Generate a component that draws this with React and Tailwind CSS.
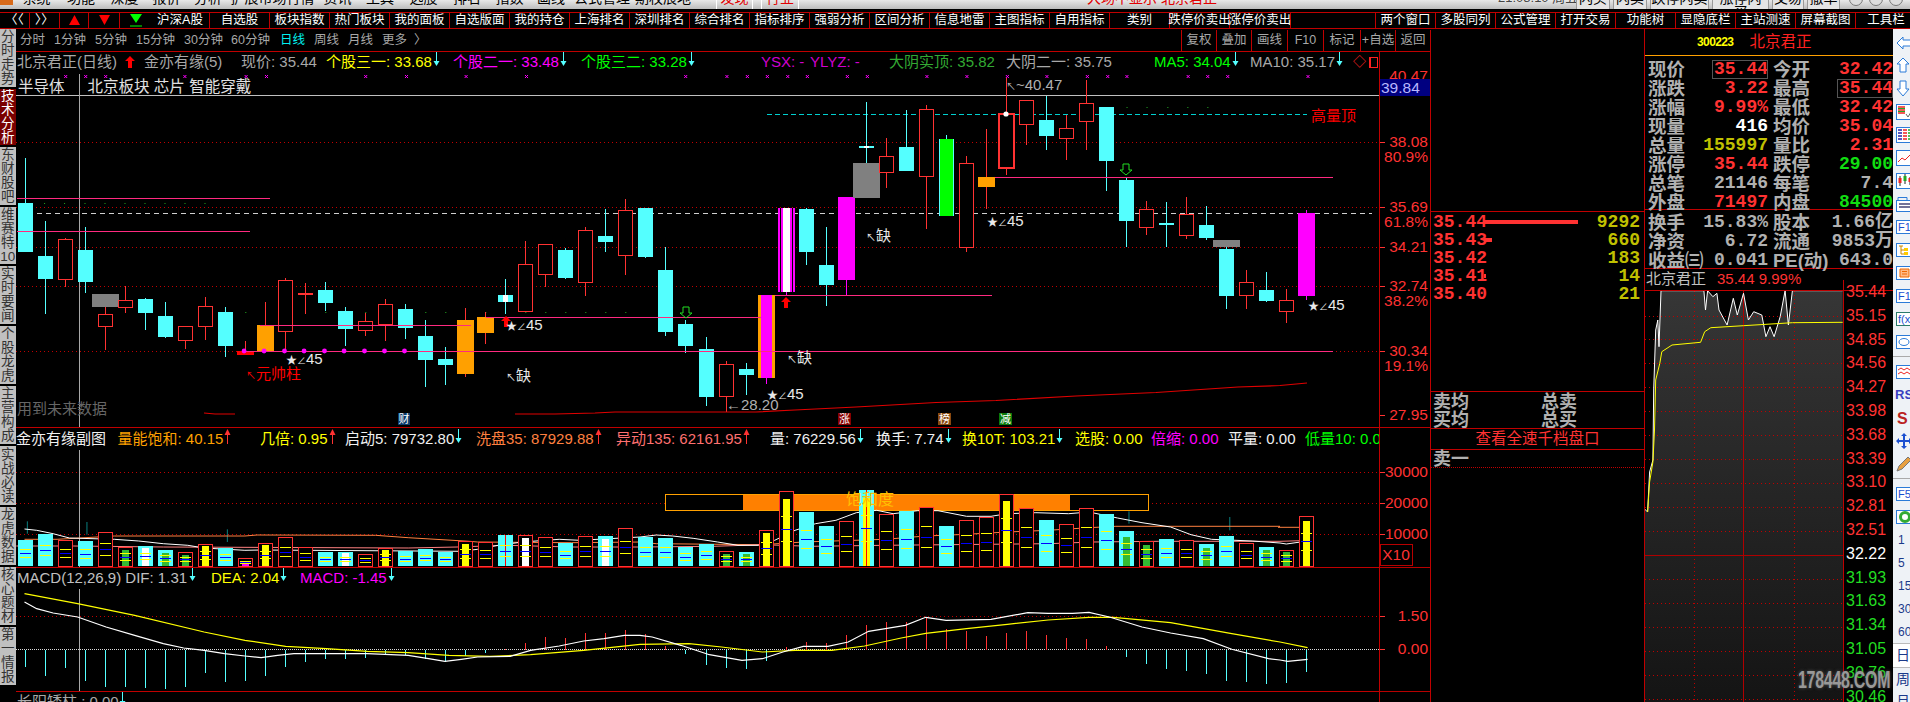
import React from "react";

const CY = "#54ffff", RD = "#ff3232", MG = "#ff00ff", OR = "#ffa000", PK = "#ff2a80", LR = "#b80000";
const cx = (i) => 24.5 + 20.03 * i;

// [type, high, bodyTop, bodyBottom, low]
const candles = [
  ["c",158,203,252,252],["c",221,256,279,314],["r",238,239,279,287],["c",227,250,282,293],["r",294,314,326,350],
  ["r",286,300,307,313],["c",298,299,313,330],["c",302,316,337,338],["r",326,326,340,349],["r",297,306,326,340],
  ["c",307,312,346,357],["R",341,351,355,355],["o",302,325,351,351],["r",278,280,331,350],["x",283,293,295,314],
  ["c",282,290,303,311],["c",307,311,329,346],["r",313,321,330,336],["r",299,304,324,341],["c",304,309,328,339],
  ["c",320,336,360,387],["c",347,359,365,385],["o",308,320,374,377],["o",312,317,333,344],["c",279,295,302,314],
  ["r",241,264,311,312],["r",244,244,274,287],["c",248,250,278,279],["r",227,230,282,296],["c",209,236,242,252],
  ["r",199,210,255,275],["c",208,208,257,258],["c",247,270,332,336],["c",320,324,346,353],["c",337,349,397,406],
  ["r",361,364,396,412],["c",363,369,375,395],["M",295,295,378,384],["S",208,208,292,295],["c",208,209,252,265],
  ["c",227,265,285,306],["m",197,197,280,295],["y",102,146,148,198],["r",138,156,172,188],["c",110,147,171,171],
  ["r",105,109,176,229],["g",135,139,216,216],["r",156,163,247,252],["o",129,177,187,209],["T",78,114,168,175],
  ["r",100,100,124,145],["c",96,120,136,150],["r",115,128,138,160],["r",80,103,121,150],["c",107,107,161,191],
  ["c",178,180,221,247],["r",201,209,227,235],["z",202,223,225,247],["r",197,214,235,239],["c",206,225,238,240],
  ["c",240,249,296,309],["r",270,282,295,309],["c",272,290,301,302],["r",289,300,311,323],["m",210,213,296,300],
];
const wide = { 4:[294,307], 42:[163,198], 60:[240,247] };

const pinkLines = [[17,270,198],[17,250,231],[260,471,325],[244,1333,351],[486,761,317],[775,992,295],[995,1333,177]];
const dots = [598,647,697,745,795,843,893,942,991].map((x) => x / 2.45);
const xMarks = [161,210,259,453,603,653,896,996,1142,1290].map((x) => x / 2.45)
  .concat([112,213,263,312,362,410,508,557,703,801,900,997,1096,1146,1193,1343,1391,1440].map((x) => 640 + x / 2.45))
  .concat([1308]);
const greens = [
  ...[108,157,207,256,305,354,403,452,501].map((x) => [x / 2.45, 203]),
  ...[601,797,895,1042,1091,1189,1287,1336,1385,1434,1483,1532].map((x) => [x / 2.45, 312]),
  ...[1192,1241,1292,1341,1390].map((x) => [640 + x / 2.45, 107]),
];

// [kind, top, innerColor, innerTop]
const vol = [
  ["c",540],["c",534],["r",540],["c",541],["r",532],["r",547,"#33bb33",550],["c",546,"#fff",548],["c",550,"#33bb33",553],["r",552,"#33bb33",555],["r",544,"#ff0",546],
  ["c",548],["r",558,MG,561],["r",543,"#ff0",545],["r",537],["r",547],["c",552],["c",552,"#fff",553],["r",554],["r",548,"#ff0",550],["c",551],
  ["c",549],["c",552],["r",541,"#ff0",544],["r",542],["c",535],["r",535,"#fff",538],["r",537],["c",543],["r",536],["c",536,"#fff",539],
  ["r",528],["c",537],["c",538],["c",547],["c",544],["r",551,"#33bb33",554],["c",552,"#33bb33",554],["r",530,"#ff0",533],["r",491,"#ff0",499],["c",512],
  ["c",526],["r",521],["c",490,"#ff0",498],["r",514],["c",511],["r",507],["c",526],["r",520],["r",517],["r",494,"#ff0",501],
  ["r",508],["c",520],["r",524],["r",508],["c",514],["c",531,"#33bb33",537],["r",541,"#33bb33",545],["c",539],["r",540],["c",544,"#33bb33",548],
  ["c",536],["r",543],["c",547,"#33bb33",550],["r",550,"#33bb33",552],["r",516,"#ff0",521],
];
const cv = (pts, off, yo) => pts.map(([x, y]) => `${(off + x / 2.45).toFixed(1)},${(yo + y / 3).toFixed(1)}`).join(" ");
const volWhite = cv([[60,201],[90,205],[130,215],[170,228],[280,232],[340,237],[400,245],[460,250],[500,258],[600,265],[640,264],[1130,268],[1170,262],[1220,250],[1280,240],[1370,232],[1420,235],[1568,225]],0,462) + " " +
  cv([[40,219],[80,222],[130,229],[190,240],[240,250],[290,250],[330,235],[380,205],[430,185],[480,175],[530,152],[580,145],[620,155],[680,146],[730,146],[800,163],[860,163],[900,155],[970,152],[1050,155],[1100,150],[1170,168],[1230,182],[1300,195],[1350,218],[1400,232],[1500,237],[1568,243]],640,462) + " " +
  cv([[40,246],[75,240]],1270,462);
const volOrange = cv([[60,232],[140,232],[280,222],[600,222],[630,219],[920,220],[1000,227],[1150,238],[1170,240],[1400,242],[1568,240]],0,462) + " " +
  cv([[40,245],[300,248],[400,240],[600,232],[700,222],[800,217],[900,210],[1000,205],[1100,197],[1166,193],[1568,193]],640,462) + " " +
  cv([[20,196],[75,196]],1270,462);
const volPink = cv([[40,252],[180,252],[400,255],[1000,258],[1120,255],[1240,250],[1400,255],[1568,255]],0,462) + " " +
  cv([[180,253],[300,248],[420,253],[600,250],[1000,245],[1110,240],[1270,238],[1568,238]],640,462) + " " +
  cv([[75,236]],1270,462);
const teal = [[67,178,215,0],[213,180,218,0],[557,202,240,0],[1198,148,185,640],[1445,165,205,640]];

const macdEnds = [615,642,617,657,675,675,678,682,675,632,660,657,642,614,600,590,590,587,578,580,590,600,582,572,562,544,525,528,514,514,504,
  516,553,575,609,617,621,597,556,540,544,520,490,481,480,464,502,507,522,513,507,519,528,531,552,585,606,621,627,636,657,660,666,663,630];
const macdWhite = cv([[60,420],[90,440],[130,453],[190,465],[260,495],[330,520],[400,545],[450,558],[500,565],[550,575],[600,582],[640,587],[680,580],[720,575],[900,575],[1000,580],[1050,590],[1090,598],[1130,592],[1170,585],[1250,583],[1300,565],[1370,552],[1430,537],[1480,530],[1530,520],[1568,520]],0,462) + " " +
  cv([[30,525],[100,550],[170,578],[250,595],[300,590],[350,570],[400,553],[460,553],[510,540],[560,508],[650,490],[700,466],[750,475],[860,472],[950,452],[1000,454],[1060,454],[1100,451],[1150,465],[1230,495],[1300,513],[1380,530],[1450,562],[1540,590],[1568,594]],640,462) + " " +
  cv([[43,598],[92,592]],1270,462);
const macdYellow = cv([[60,395],[190,425],[330,460],[500,510],[600,535],[700,553],[800,560],[900,568],[1000,572],[1100,580],[1200,583],[1300,578],[1430,565],[1568,547]],0,462) + " " +
  cv([[120,545],[200,555],[300,570],[380,565],[470,565],[550,552],[640,528],[700,514],[800,500],[900,487],[1000,474],[1100,466],[1160,466],[1300,482],[1450,515],[1568,540]],640,462) + " " +
  cv([[92,557]],1270,462);

const priceLine = cv([[917,225],[917,140],[925,150],[930,30]],1270,462) + " " +
  cv([[938,690],[940,480],[945,300],[950,270],[953,350],[958,182],[1063,182],[1067,240],[1072,182],[1085,200],[1095,190],[1100,240],[1120,285],[1135,205],[1145,255],[1160,190],[1172,270],[1185,245],[1205,255],[1215,320],[1225,290],[1235,320],[1250,260],[1262,182],[1270,285],[1280,182],[1403,182]],1270,230);
const avgLine = cv([[925,150],[930,60],[938,0]],1270,462) + " " +
  cv([[942,600],[945,450],[955,400],[960,365],[985,345],[1055,337],[1065,305],[1080,293],[1160,287],[1280,278],[1403,277]],1270,230);
const fillLine = `1645,702 1645,537 ${priceLine} 1843,702`;
const tLabels = [["35.44",RD],["35.15",RD],["34.85",RD],["34.56",RD],["34.27",RD],["33.98",RD],["33.68",RD],["33.39",RD],["33.10",RD],["32.81",RD],["32.51",RD],["32.22","#fff"],["31.93","#22dd22"],["31.63","#22dd22"],["31.34","#22dd22"],["31.05","#22dd22"],["30.76","#22dd22"],["30.46","#22dd22"]];
const tY = [292,316,339,363,387,411,435,459,483,507,531,555,579,603,627,651,675,699];

const menu = [
  ["系统","w-[45px]"],["功能","w-[44px]"],["深度","w-[43px]"],["报价","w-[41px]"],["分析","w-[42px]"],["扩展市场行情","w-[87px]"],["资讯","w-[43px]"],["工具","w-[42px]"],["选股","w-[45px]"],["排名","w-[42px]"],["指数","w-[43px]"],["画线","w-[40px]"],["公式管理","w-[62px]"],["期权展地","w-[60px]"],
];
const tools = [
  ["沪深A股","w-[59px]"],["自选股","w-[60px]"],["板块指数","w-[60px]"],["热门板块","w-[60px]"],["我的面板","w-[60px]"],["自选版面","w-[60px]"],["我的持仓","w-[60px]"],["上海排名","w-[60px]"],["深圳排名","w-[60px]"],["综合排名","w-[60px]"],["指标排序","w-[60px]"],["强弱分析","w-[60px]"],["区间分析","w-[60px]"],["信息地雷","w-[60px]"],["主图指标","w-[60px]"],["自用指标","w-[60px]"],["类别","w-[60px]"],["跌停价卖出","w-[60px]"],["涨停价卖出","w-[61px]"],
];
const tools2 = ["两个窗口","多股同列","公式管理","打开交易","功能树","显隐底栏","主站测速","屏幕截图","工具栏"];
const sideTabs = [
  ["分时走势","h-[60px]"],["技术分析","h-[58px]",1],["东财股吧","h-[60px]"],["维赛特10","h-[59px]"],["实时要闻","h-[60px]"],["个股龙虎","h-[60px]"],["主营构成","h-[60px]"],["实战必读","h-[61px]"],["龙虎数据","h-[60px]"],["核心题材","h-[60px]"],["第一情报","h-[60px]"],
];
const periods = [["分时","w-[34px]"],["1分钟","w-[41px]"],["5分钟","w-[41px]"],["15分钟","w-[48px]"],["30分钟","w-[47px]"],["60分钟","w-[49px]"],["日线","w-[34px]",1],["周线","w-[34px]"],["月线","w-[34px]"],["更多","w-[32px]"],["〉","w-[24px]"]];
const periodBtns = [["复权","w-[35px]"],["叠加","w-[35px]"],["画线","w-[36px]"],["F10","w-[36px]"],["标记","w-[37px]"],["+自选","w-[35px]"],["返回","w-[36px]"]];

const quote = [
  ["现价","35.44",RD,"今开","32.42",RD,1],["涨跌","3.22",RD,"最高","35.44",RD,2],["涨幅","9.99%",RD,"最低","32.42",RD],["现量","416","#fff","均价","35.04",RD],
  ["总量","155997","#c0c000","量比","2.31",RD],["涨停","35.44",RD,"跌停","29.00","#11dd11"],["总笔","21146","#b0b0b0","每笔","7.4","#b0b0b0"],["外盘","71497",RD,"内盘","84500","#11dd11"],
];
const quote2 = [["换手","15.83%","股本","1.66亿"],["净资","6.72","流通","9853万"],["收益㈢","0.041","PE(动)","643.0"]];
const book = [["35.44","9292","w-[94px]"],["35.43","660","w-[8px]"],["35.42","183","w-0"],["35.41","14","w-[2px]"],["35.40","21","w-0"]];

const mono = "[font-family:'Liberation_Mono','Noto_Sans_CJK_SC',monospace]";

function Down({ c = CY }) {
  return (
    <svg width="7" height="15" viewBox="0 0 7 15" className="inline-block shrink-0 align-top">
      <path d="M3.5 0V11" stroke={c} strokeWidth="1" />
      <path d="M0.5 9H6.5L3.5 14Z" fill={c} />
    </svg>
  );
}
function Up({ c = RD }) {
  return (
    <svg width="7" height="15" viewBox="0 0 7 15" className="inline-block shrink-0 align-top">
      <path d="M3.5 4V15" stroke={c} strokeWidth="1" />
      <path d="M0.5 6H6.5L3.5 0Z" fill={c} />
    </svg>
  );
}

function Candle({ d, i }) {
  const [t, hi, top, bot, lo] = d;
  const x = Math.round(cx(i));
  const W = wide[i];
  const colors = { c: CY, r: RD, R: RD, o: RD, x: RD, z: CY, M: MG, S: MG, m: MG, y: CY, g: CY, T: RD };
  const col = colors[t];
  const h = Math.max(bot - top, 1);
  return (
    <g shapeRendering="crispEdges">
      <line x1={x + 0.5} x2={x + 0.5} y1={hi} y2={lo} stroke={col} />
      {t === "c" && <rect x={x - 7} y={top} width="15" height={h} fill={CY} />}
      {t === "r" && <rect x={x - 6.5} y={top + 0.5} width="14" height={h} fill="#000" stroke={RD} />}
      {t === "T" && <rect x={x - 7} y={top} width="15" height={h} fill="#000" stroke={RD} strokeWidth="1.5" />}
      {t === "R" && <rect x={x - 8} y={top} width="17" height={h} fill="#ff0000" />}
      {t === "o" && <rect x={x - 8} y={top} width="17" height={h} fill={OR} />}
      {t === "x" && <rect x={x - 7} y={top} width="15" height={h} fill={RD} />}
      {t === "z" && <rect x={x - 7} y={top} width="15" height={h} fill={CY} />}
      {t === "M" && <><rect x={x - 8} y={top} width="17" height={h} fill={OR} /><rect x={x - 5} y={top} width="11" height={h} fill={MG} /></>}
      {t === "S" && <><rect x={x - 8} y={top} width="17" height={h} fill={MG} /><rect x={x - 6} y={top} width="1" height={h} fill="#000" /><rect x={x + 6} y={top} width="1" height={h} fill="#000" /><rect x={x - 3} y={top} width="7" height={h} fill="#fff" /></>}
      {t === "m" && <rect x={x - 8} y={top} width="17" height={h} fill={MG} />}
      {t === "y" && <rect x={x - 7} y={top} width="15" height={h} fill={CY} />}
      {t === "g" && <><rect x={x - 7} y={top} width="15" height={h} fill={CY} /><rect x={x - 6} y={top} width="13" height={h} fill="#00ff00" /></>}
      {W && <rect x={x - 13} y={W[0]} width="27" height={W[1] - W[0]} fill="#808080" />}
      {i === 24 && <rect x={x - 2} y={top} width="5" height={h} fill="#fff" />}
      {i === 42 && <rect x={x - 2} y={top} width="5" height={h} fill="#fff" />}
    </g>
  );
}

function MainChart() {
  return (
    <svg viewBox="16 72 1363 355" width="1363" height="355" className="block absolute inset-0">
      {[142, 207, 247, 286, 351].map((y) => (
        <line key={y} x1="16" x2="1379" y1={y + 0.5} y2={y + 0.5} stroke="#c00000" strokeDasharray="1 3" />
      ))}
      <line x1="28" x2="1372" y1="213.5" y2="213.5" stroke="#d0d0d0" strokeDasharray="5 4" />
      <line x1="16" x2="1379" y1="95.5" y2="95.5" stroke="#c0c0c0" />
      <line x1="79.5" x2="79.5" y1="74" y2="427" stroke="#a8a8a8" />
      <line x1="767" x2="1307" y1="114.5" y2="114.5" stroke="#00d0d0" strokeDasharray="5 3" />
      {greens.map(([x, y], i) => <rect key={i} x={x} y={y} width="1" height="1" fill="#22aa22" />)}
      {xMarks.map((x, i) => (
        <g key={i} stroke={MG}><line x1={x - 1.5} x2={x + 1.5} y1="75" y2="78" /><line x1={x + 1.5} x2={x - 1.5} y1="75" y2="78" /></g>
      ))}
      {candles.map((d, i) => <Candle key={i} d={d} i={i} />)}
      {pinkLines.map(([a, b, y], i) => <line key={i} x1={a} x2={b} y1={y + 0.5} y2={y + 0.5} stroke={PK} />)}
      {dots.map((x, i) => <circle key={i} cx={x} cy="351" r="2.4" fill={MG} />)}
      <polyline points="204,413 215,414 235,414" fill="none" stroke="#e00000" />
      <polyline points="515,414 555,414 595,413 615,412 756,412 795,410 856,407 936,402.5 996,400.5 1076,396 1156,392.5 1238,387 1280,385.5 1307,383" fill="none" stroke="#e00000" strokeWidth="1.2" />
      <circle cx="1006" cy="114" r="2.6" fill="#fff" />
      <path d="M786 297l5 5h-3v6h-4v-6h-3z" fill="#ff0000" />
      <path d="M506 316l5 5h-3v6h-4v-6h-3z" fill="#ff0000" />
      <path d="M683 307h6v6h3l-6 5-6-5h3z" fill="none" stroke="#22dd22" />
      <path d="M1123 164h6v6h3l-6 5-6-5h3z" fill="none" stroke="#22dd22" />
      <g fontSize="15" fill="#e8e8e8">
        {[[286,364],[506,330],[767,399],[987,226],[1308,310]].map(([x, y], i) => (
          <text key={i} x={x} y={y}><tspan fontSize="11">★</tspan><tspan fontSize="9">∠</tspan>45</text>
        ))}
        {[[506,381],[787,363],[866,241]].map(([x, y], i) => (
          <text key={i} x={x} y={y}><tspan fontSize="10">↖</tspan>缺</text>
        ))}
      </g>
      <text x="246" y="379" fontSize="15" fill="#ff0000"><tspan fontSize="10">↖</tspan>元帅柱</text>
      <text x="1311" y="121" fontSize="15" fill="#ff0000">高量顶</text>
      <text x="17" y="414" fontSize="15" fill="#666">用到未来数据</text>
      <text x="726" y="410" fontSize="15" fill="#b0b0b0">←28.20</text>
      <text x="1006" y="90" fontSize="15" fill="#b0b0b0"><tspan fontSize="10">↖</tspan>~40.47</text>
      <g fontSize="11" textAnchor="middle" fill="#fff">
        <rect x="398" y="413" width="12" height="12" fill="#0a3a6a" /><text x="404" y="423">财</text>
        <rect x="838" y="413" width="13" height="12" fill="#880000" /><text x="844.5" y="423">涨</text>
        <rect x="938" y="413" width="13" height="12" fill="#8a4a10" /><text x="944.5" y="423">榜</text>
        <rect x="999" y="413" width="13" height="12" fill="#0a7a0a" /><text x="1005.5" y="423">减</text>
      </g>
    </svg>
  );
}

function SubChart() {
  return (
    <svg viewBox="16 450 1363 117" width="1363" height="117" className="block">
      {[472, 503, 534].map((y) => <line key={y} x1="16" x2="1379" y1={y + 0.5} y2={y + 0.5} stroke="#c00000" strokeDasharray="1 3" />)}
      <line x1="79.5" x2="79.5" y1="450" y2="567" stroke="#a8a8a8" />
      <rect x="665.5" y="494.5" width="483" height="16" fill="#000" stroke={OR} />
      <rect x="743" y="495" width="327" height="15" fill="#ff8000" />
      {teal.map(([x, a, b, o], i) => <line key={i} x1={o + x / 2.45} x2={o + x / 2.45} y1={462 + a / 3} y2={462 + b / 3} stroke="#0a8080" />)}
      <polyline points={volOrange} fill="none" stroke="#ff8040" />
      <polyline points={volPink} fill="none" stroke="#ff8080" />
      <polyline points={volWhite} fill="none" stroke="#fff" />
      {vol.map(([k, top, ic, it], i) => {
        const x = Math.round(cx(i));
        const h = 566 - top;
        return (
          <g key={i} shapeRendering="crispEdges">
            {k === "c" ? <rect x={x - 7} y={top} width="15" height={h} fill={CY} /> : <rect x={x - 6.5} y={top + 0.5} width="14" height={h} fill="#000" stroke={RD} />}
            {ic && <rect x={x - 3} y={it} width="7" height={566 - it} fill={ic} />}
            {i === 24 || i === 42 ? <line x1={x + 0.5} x2={x + 0.5} y1={top} y2="566" stroke="#ff0000" /> : null}
            <rect x={x - 5} y={top + h * 0.33} width="11" height="1" fill="#ffff00" />
            <rect x={x - 5} y={top + h * 0.5} width="11" height="1" fill="#0000ff" />
            <rect x={x - 5} y={top + h * 0.67} width="11" height="1" fill="#ffff00" />
          </g>
        );
      })}
      <text x="846" y="505" fontSize="16" fill="#ffc000">饱和度</text>
    </svg>
  );
}

function MacdChart() {
  return (
    <svg viewBox="16 589 1363 102" width="1363" height="102" className="block">
      <line x1="16" x2="1379" y1="616.5" y2="616.5" stroke="#c00000" strokeDasharray="1 3" />
      <line x1="16" x2="1379" y1="649.5" y2="649.5" stroke="#d8d8d8" strokeDasharray="1 1" />
      <line x1="79.5" x2="79.5" y1="589" y2="691" stroke="#a8a8a8" />
      {macdEnds.map((e, i) => {
        const x = Math.round(cx(i)) + 0.5;
        const y = 462 + e / 3;
        return <line key={i} x1={x} x2={x} y1="649.5" y2={y} stroke={e > 562 ? CY : RD} shapeRendering="crispEdges" />;
      })}
      <polyline points={macdYellow} fill="none" stroke="#ffff00" strokeWidth="1.2" />
      <polyline points={macdWhite} fill="none" stroke="#fff" strokeWidth="1.2" />
    </svg>
  );
}

function AxisCol() {
  return (
    <svg viewBox="1380 52 50 650" width="50" height="650" className="block">
      <g fontSize="15.5" fill={RD} textAnchor="end">
        <text x="1428" y="81">40.47</text>
        <rect x="1380" y="79" width="50" height="17" fill="#000080" />
        <text x="1381" y="93" textAnchor="start" fill="#b8b8ff">39.84</text>
        {[["38.08",147],["80.9%",162],["35.69",212],["61.8%",227],["34.21",252],["32.74",291],["38.2%",306],["30.34",356],["19.1%",371],["27.95",420]].map(([s, y]) => (
          <text key={s} x="1428" y={y}>{s}</text>
        ))}
        {[["30000",477],["20000",508],["10000",539],["1.50",621],["0.00",654]].map(([s, y]) => (
          <text key={s} x="1428" y={y}>{s}</text>
        ))}
        <rect x="1380.5" y="544.5" width="32" height="21" fill="none" stroke={LR} />
        <text x="1396" y="560" textAnchor="middle">X10</text>
      </g>
      {[142,207,247,286,351,415,472,503,534,616,649].map((y) => <line key={y} x1="1380" x2="1385" y1={y + 0.5} y2={y + 0.5} stroke={RD} />)}
      {[427.5,567.5,691.5].map((y) => <line key={y} x1="1380" x2="1430" y1={y} y2={y} stroke={LR} />)}
    </svg>
  );
}

function Icon({ n }) {
  const b = "#2b7bd8";
  const s = { 0: <path d="M2 10l6-6v3h8v6H8v3z" fill="#fff" stroke={b} />,
    1: <path d="M8 2l6 6h-3v8H5V8H2z" fill="#fff" stroke={b} />,
    2: <path d="M5 2h6v8h3l-6 7-6-7h3z" fill="#fff" stroke={b} />,
    3: <g><rect x="1.5" y="2.5" width="17" height="15" fill="#fff" stroke={b} /><path d="M3 5h7M3 8h7M3 11h7" stroke="#e22" strokeWidth="1.5" /><path d="M3 6.5h7M3 9.5h7" stroke="#2a2" /><path d="M11 12l2 3 3-5" stroke="#666" fill="none" /></g>,
    4: <g><rect x="1.5" y="2.5" width="17" height="15" fill="#fff" stroke={b} /><path d="M3 5h4M3 8h4M3 11h4M3 14h4" stroke="#22a" strokeWidth="1.5" /><path d="M8 5h4M8 8h4M8 11h4M8 14h4" stroke="#e22" strokeWidth="1.5" /><path d="M13 5h3M13 8h3M13 11h3M13 14h3" stroke="#2a2" strokeWidth="1.5" /></g>,
    5: <g><rect x="1.5" y="2.5" width="17" height="15" fill="#fff" stroke={b} /><path d="M3 14l4-4 3 2 6-6" stroke="#e22" fill="none" /></g>,
    6: <g><rect x="1.5" y="2.5" width="17" height="15" fill="#fff" stroke={b} /><path d="M5 5v10M10 3v10M15 6v8" stroke="#222" /><rect x="3.5" y="7" width="3" height="5" fill="#e22" /><rect x="8.5" y="5" width="3" height="5" fill="#2a2" /><rect x="13.5" y="7" width="3" height="4" fill="#e22" /></g>,
    7: <g><rect x="1.5" y="6.5" width="17" height="11" fill="#fff" stroke={b} /><path d="M4 10h11M4 13h11" stroke="#447" strokeWidth="1.5" /><path d="M3 6V3.5h9V6" stroke={b} fill="none" /></g>,
    9: <g><rect x="1.5" y="3.5" width="17" height="13" fill="#fff" stroke={b} /><path d="M4 6h4M6 6v8h4M6 10h4" stroke="#c80" fill="none" /><rect x="9" y="8" width="4" height="3" fill="#fc0" /><rect x="9" y="12" width="4" height="3" fill="#fc0" /></g>,
    10: <g><rect x="1.5" y="3.5" width="17" height="13" fill="#fff" stroke={b} /><path d="M5 6h9v8H5z" fill="#fb8" stroke="#e60" /><path d="M7 8.5h5M7 11h5" stroke="#e60" /></g>,
    13: <g><rect x="1.5" y="3.5" width="17" height="13" fill="#fff" stroke={b} /><ellipse cx="9" cy="10" rx="5" ry="3.5" fill="none" stroke={b} /></g>,
    14: <g><rect x="1.5" y="3.5" width="17" height="13" fill="#fff" stroke={b} /><path d="M3 8l3-2 3 2 3-2 3 2M3 12l3-2 3 2 3-2 3 2" stroke="#e22" fill="none" /></g>,
    16: <text x="2" y="16" fontSize="16" fontWeight="700" fill="#b22">S</text>,
    17: <path d="M9 2l3 3h-2v4h4V7l3 3-3 3v-2h-4v4h2l-3 3-3-3h2v-4H4v2l-3-3 3-3v2h4V5H6z" fill="#1a4fd0" />,
    18: <path d="M2 17l2-5 9-9 3 3-9 9z" fill="#e8a040" stroke="#777" />,
    20: <g><rect x="1.5" y="3.5" width="17" height="13" fill="#fff" stroke={b} /><circle cx="10" cy="10" r="4.5" fill="none" stroke="#3a3" strokeWidth="3" /></g>,
  };
  const texts = { 8: "F10", 11: "F12", 12: "f(x)", 19: "F5" };
  if (texts[n]) return (
    <svg width="20" height="20" viewBox="0 0 20 20" className="block shrink-0"><rect x="1.5" y="3.5" width="17" height="13" fill="#fff" stroke={n === 12 ? "#2a7a6a" : b} /><text x="3" y="14" fontSize="11" fill="#1a4fd0">{texts[n]}</text></svg>
  );
  if (n === 15) return <div className="text-[13px] font-bold text-[#3a3fc0] leading-none">RSI</div>;
  return <svg width="20" height="20" viewBox="0 0 20 20" className="block shrink-0">{s[n]}</svg>;
}

function RightBar() {
  const nums = ["1", "5", "15", "30", "60"];
  return (
    <div className="w-[17px] shrink-0 overflow-hidden bg-[#eef2f6] flex flex-col pt-[2px]">
      {[0,1,2,3,4,5,6,7,8,9,10,11,12,13].map((n) => (
        <div key={n} className="h-[23px] shrink-0 flex items-center pl-[2px]"><Icon n={n} /></div>
      ))}
      <div className="h-px bg-[#aaa] my-[3px] shrink-0" />
      {[14,15,16,17,18].map((n) => (
        <div key={n} className="h-[23px] shrink-0 flex items-center pl-[2px]"><Icon n={n} /></div>
      ))}
      <div className="h-px bg-[#aaa] my-[3px] shrink-0" />
      {[19,20].map((n) => (
        <div key={n} className="h-[23px] shrink-0 flex items-center pl-[2px]"><Icon n={n} /></div>
      ))}
      {nums.map((n) => (
        <div key={n} className="h-[23px] shrink-0 flex items-center pl-[5px] text-[12px] text-[#1a3a8a]">{n}</div>
      ))}
      <div className="h-[25px] shrink-0 flex items-center pl-[3px] text-[14px] text-[#1a3a8a] bg-white border-y border-[#bbb]">日</div>
      <div className="h-[23px] shrink-0 flex items-center pl-[3px] text-[14px] text-[#1a3a8a]">周</div>
      <div className="h-[20px] shrink-0 flex items-center pl-[3px] text-[14px] text-[#1a3a8a]">月</div>
    </div>
  );
}

function Sidebar() {
  return (
    <div className="w-[16px] shrink-0 bg-black flex flex-col">
      {sideTabs.map(([s, h, on]) => (
        <div key={s} className={`${h} shrink-0 w-[15.5px] border-b-2 border-black flex flex-col items-center justify-center overflow-hidden text-[13.5px] leading-[14px] ${on ? "bg-[#7a0000] text-white" : "bg-[#c0c0c0] text-[#333]"}`}>
          {(s === "维赛特10" ? ["维", "赛", "特", "10"] : s.split("")).map((c, i) => <span key={i} className="block">{c}</span>)}
        </div>
      ))}
    </div>
  );
}

function TopMenu() {
  return (
    <div className="h-[9px] shrink-0 bg-gradient-to-b from-[#e8e8e8] to-[#bdbdbd] flex overflow-hidden relative text-[14px] leading-[14px] text-black">
      <div className="w-[13px] h-[5px] bg-[#d86a1a] shrink-0" />
      <div className="w-[1px] shrink-0" />
      <div className="flex -mt-[9px]">
        {menu.map(([m, w]) => <div key={m} className={`${w} shrink-0 text-center whitespace-nowrap`}>{m}</div>)}
      </div>
      <div className="w-[23px] shrink-0" />
      <div className="w-[37px] shrink-0 -mt-[9px] border-x border-white text-center text-[#e00000]">发现</div>
      <div className="w-[8px] shrink-0" />
      <div className="w-[38px] shrink-0 -mt-[9px] border-x border-white text-center text-[#e00000]">行业</div>
      <div className="w-[288px] shrink-0" />
      <div className="w-[120px] shrink-0 -mt-[9px] text-[#e00000] whitespace-nowrap">大场不显示 北京君正</div>
      <div className="w-[291px] shrink-0" />
      <div className="w-[68px] shrink-0 -mt-[9px] text-[#444] text-[13px] whitespace-nowrap">21:08:10 周五</div>
      <div className="flex gap-[3px] pl-[10px] -mt-[9px]">
        {[["闪买","w-[34px]"],["闪卖","w-[34px]"],["跌停闪卖","w-[59px]"],["涨停闪买","w-[57px]"],["交易","w-[32px]"],["撤单","w-[33px]"]].map(([t, w]) => (
          <div key={t} className={`${w} text-center bg-[#e4e4e4] border-x border-[#999]`}>{t}</div>
        ))}
      </div>
      <div className="flex gap-[6px] pl-[9px] -mt-[8px]">
        {[0, 1, 2].map((i) => <div key={i} className="w-[14px] h-[14px] rounded-full border border-[#777] bg-[#ddd]" />)}
      </div>
    </div>
  );
}

function Toolbar() {
  const cell = "shrink-0 h-full flex items-center justify-center whitespace-nowrap border-r border-[#c00000] text-[12.5px] text-white";
  return (
    <div className="h-[17.5px] mt-[2.5px] shrink-0 border-y border-[#c00000] flex">
      <div className={`${cell} w-[30px] text-[#ffee00]`}>〈〈</div>
      <div className={`${cell} w-[30px] text-[#ffee00]`}>〉〉</div>
      <div className={`${cell} w-[29px]`}><svg width="11" height="10" viewBox="0 0 11 10"><path d="M5.5 0l5.5 10H0z" fill="#ff0000" /></svg></div>
      <div className={`${cell} w-[31px]`}><svg width="11" height="10" viewBox="0 0 11 10"><path d="M5.5 10L11 0H0z" fill="#ff0000" /></svg></div>
      <div className="shrink-0 h-full w-[31px] flex items-center justify-center"><svg width="12" height="13" viewBox="0 0 12 13"><path d="M6 9L12 0H0z" fill="#00ff00" /><path d="M0 12h12" stroke="#00ff00" /></svg></div>
      {tools.map(([t, w]) => <div key={t} className={`${cell} ${w}`}>{t}</div>)}
      <div className="w-[85px] shrink-0 border-r border-[#c00000]" />
      {tools2.map((t) => <div key={t} className={`${cell} w-[60px] last:border-r-0`}>{t}</div>)}
    </div>
  );
}

function PeriodRow() {
  return (
    <div className="h-[23px] shrink-0 flex border-b border-[#c00000] text-[12.5px] text-[#a8a8a8] items-stretch">
      <div className="w-[4px]" />
      {periods.map(([p, w, on]) => (
        <div key={p} className={`${w} shrink-0 flex items-center whitespace-nowrap ${on ? "text-[#00f0f0]" : ""}`}>{p}</div>
      ))}
      <div className="flex-1" />
      {periodBtns.map(([p, w]) => (
        <div key={p} className={`${w} shrink-0 flex items-center justify-center whitespace-nowrap border-l border-[#c00000] mt-px last:border-r`}>{p}</div>
      ))}
    </div>
  );
}

const titleItems = [
  ["w-[97px]", "#a8a8a8", "金亦有缘(5)"],
  ["w-[85px]", "#a8a8a8", "现价: 35.44"],
  ["w-[127px]", "#ffff00", "个股三一: 33.68", "d"],
  ["w-[128px]", "#ff00ff", "个股二一: 33.48", "d"],
  ["w-[180px]", "#00ff00", "个股三二: 33.28", "d"],
  ["w-[49px]", "#d000d0", "YSX: -"],
  ["w-[79px]", "#d000d0", "YLYZ: -"],
  ["w-[117px]", "#33aa33", "大阴实顶: 35.82"],
  ["w-[148px]", "#a8a8a8", "大阴二一: 35.75"],
  ["w-[96px]", "#00ff00", "MA5: 34.04", "d"],
  ["w-[103px]", "#a8a8a8", "MA10: 35.17", "d"],
];
const subItems = [
  ["w-[101.5px]", "#f0f0f0", "金亦有缘副图"],
  ["w-[142.5px]", "#ffa000", "量能饱和: 40.15", "u"],
  ["w-[85px]", "#ffff00", "几倍: 0.95", "u"],
  ["w-[131px]", "#f0f0f0", "启动5: 79732.80", "d"],
  ["w-[140px]", "#ff8040", "洗盘35: 87929.88", "u"],
  ["w-[154px]", "#ff7070", "异动135: 62161.95", "u"],
  ["w-[106px]", "#f0f0f0", "量: 76229.56", "d"],
  ["w-[86px]", "#f0f0f0", "换手: 7.74", "d"],
  ["w-[113px]", "#ffff00", "换10T: 103.21", "d"],
  ["w-[76px]", "#ffff00", "选股: 0.00"],
  ["w-[77px]", "#ff00ff", "倍缩: 0.00"],
  ["w-[77px]", "#f0f0f0", "平量: 0.00"],
  ["w-[80px]", "#00ff00", "低量10: 0.00"],
];

function Info({ items, h = "h-[20px]" }) {
  return (
    <div className={`${h} shrink-0 flex items-center overflow-hidden text-[15px] leading-[20px]`}>
      {items.map(([w, c, t, a]) => (
        <div key={t} className={`${w} shrink-0 flex items-center whitespace-nowrap`} style={{ color: c }}>
          {t}
          {a === "d" && <span className="ml-[1px]"><Down /></span>}
          {a === "u" && <span className="ml-[1px]"><Up /></span>}
        </div>
      ))}
    </div>
  );
}

function ChartCol() {
  return (
    <div className="w-[1363px] shrink-0 flex flex-col border-r border-[#c00000] box-content">
      <div className="h-[20px] shrink-0 flex items-center overflow-hidden text-[15px]">
        <div className="w-[128px] shrink-0 flex items-center pl-[1px] text-[#a8a8a8] whitespace-nowrap">
          北京君正(日线)
          <svg width="10" height="12" viewBox="0 0 10 12" className="ml-[8px]"><path d="M5 0l5 5H7v7H3V5H0z" fill="#ff0000" /></svg>
        </div>
        <Info items={titleItems} />
        <div className="text-[#ff2020] flex items-center gap-[3px] text-[13px] shrink-0">◇<div className="w-[9px] h-[11px] border border-[#ff2020] border-l-2" /></div>
      </div>
      <div className="h-[355px] shrink-0 relative">
        <MainChart />
        <div className="absolute left-[2px] top-[6px] flex gap-[23px] text-[15.5px] leading-[18px] text-[#e0e0e0] whitespace-nowrap">
          <span>半导体</span><span>北京板块 芯片 智能穿戴</span>
        </div>
      </div>
      <div className="border-t border-[#c00000]" />
      <Info items={subItems} h="h-[22px]" />
      <SubChart />
      <div className="border-t border-[#c00000]" />
      <div className="h-[21px] shrink-0 flex items-center text-[15px] overflow-hidden text-[#c0c0c0] pl-[1px] whitespace-nowrap">
        <span className="w-[194px] shrink-0 flex items-center">MACD(12,26,9) DIF: 1.31<span className="ml-[2px]"><Down /></span></span>
        <span className="w-[89px] shrink-0 text-[#ffff00] flex items-center">DEA: 2.04<span className="ml-[1px]"><Down /></span></span>
        <span className="shrink-0 text-[#ff00ff] flex items-center">MACD: -1.45<span className="ml-[1px]"><Down /></span></span>
      </div>
      <MacdChart />
      <div className="border-t border-[#c00000]" />
      <div className="h-[10px] overflow-hidden text-[15px] leading-[20px] text-[#a8a8a8] pl-[1px] whitespace-nowrap flex items-start">长阳矮柱 : 0.00<Down /></div>
    </div>
  );
}

function OrderBook() {
  return (
    <div className="w-[213px] shrink-0 flex flex-col border-r border-[#c00000] box-content">
      <div className="h-[183px] shrink-0 border-b border-[#c00000]" />
      <div className={`pt-px flex flex-col h-[179px] shrink-0 ${mono}`}>
        {book.map(([p, v, w]) => (
          <div key={p} className="h-[18px] shrink-0 flex items-center pl-[2px] pr-[4px] text-[18px] font-bold leading-[18px]">
            <span className="text-[#ff3232] w-[51px] shrink-0 whitespace-nowrap">{p}</span>
            <div className={`${w} h-[4px] bg-[#ff3232] shrink-0`} />
            <span className="flex-1 text-right text-[#c0c000]">{v}</span>
          </div>
        ))}
      </div>
      <div className="h-[37px] shrink-0 border-t border-[#c00000] flex flex-col text-[18px] font-bold text-[#b0b0b0] pl-[2px] pt-px leading-[18px]">
        <div className="flex"><span className="w-[108px]">卖均</span><span>总卖</span></div>
        <div className="flex"><span className="w-[108px]">买均</span><span>总买</span></div>
      </div>
      <div className="h-[22px] shrink-0 border-t border-b border-[#c00000] flex items-center justify-center text-[15.5px] text-[#ff3232]">查看全速千档盘口</div>
      <div className="h-[18px] shrink-0 text-[18px] font-bold text-[#b0b0b0] pl-[2px] leading-[18px] border-b border-dotted border-[#c00000]">卖一</div>
    </div>
  );
}

function TimeChart() {
  const hs = tY.slice(1);
  return (
    <div className="flex-1 flex min-h-0">
      <svg viewBox="1645 291 198 411" width="198" height="411" className="block shrink-0">
        <defs>
          <linearGradient id="tg" x1="0" y1="0" x2="0" y2="1">
            <stop offset="0" stopColor="#363636" />
            <stop offset="1" stopColor="#141414" />
          </linearGradient>
        </defs>
        <polygon points={fillLine} fill="url(#tg)" />
        {hs.map((y) => y !== 555 && <line key={y} x1="1645" x2="1843" y1={y + 0.5} y2={y + 0.5} stroke="#c00000" strokeDasharray="1 3" />)}
        <line x1="1645" x2="1843" y1="555.5" y2="555.5" stroke="#b00000" />
        {[1694.5, 1794.5].map((x) => <line key={x} x1={x} x2={x} y1="291" y2="702" stroke="#c00000" strokeDasharray="1 3" />)}
        <line x1="1743.5" x2="1743.5" y1="291" y2="702" stroke="#b00000" />
        <polyline points={priceLine} fill="none" stroke="#fff" />
        <polyline points={avgLine} fill="none" stroke="#ffff00" />
      </svg>
      <div className="flex-1 border-l border-[#c00000] flex flex-col items-start pl-[2px] text-[16px] leading-[23.8px] -mt-[11px] overflow-hidden">
        {tLabels.map(([t, c]) => <div key={t} style={{ color: c }} className="h-[23.8px] shrink-0">{t}</div>)}
      </div>
    </div>
  );
}

function QuotePanel() {
  const lbl = "text-[18.5px] font-bold text-[#b0b0b0] whitespace-nowrap";
  const num = `${mono} text-[18px] font-bold leading-[19px] whitespace-nowrap`;
  return (
    <div className="w-[248px] shrink-0 flex flex-col overflow-hidden">
      <div className="h-[27px] shrink-0 border-b border-[#ffa000] flex items-center pl-[52px] gap-[16px]">
        <span className="text-[12px] font-bold text-[#ffff00] tracking-[-0.6px]">300223</span>
        <span className="text-[15.5px] text-[#ff2020]">北京君正</span>
      </div>
      <div className="h-[154px] shrink-0 flex flex-col pl-[3px] pt-[3.5px] border-b border-[#c00000]">
        {quote.map(([a, b, c, d, e, f, box]) => (
          <div key={a} className="h-[19px] shrink-0 grid grid-cols-[120px_120px] gap-[5px] leading-[19px]">
            <div className="flex justify-between relative"><span className={lbl}>{a}</span><span className={`${num} ${box === 1 ? "outline outline-[#555] -outline-offset-1 pl-[2px]" : ""}`} style={{ color: c }}>{b}</span></div>
            <div className="flex justify-between"><span className={lbl}>{d}</span><span className={`${num} ${box === 2 ? "outline outline-[#555] -outline-offset-1 pl-[2px]" : ""}`} style={{ color: f }}>{e}</span></div>
          </div>
        ))}
      </div>
      <div className="h-[59px] shrink-0 flex flex-col pl-[3px] pt-[2.5px] border-b border-[#c00000]">
        {quote2.map(([a, b, d, e]) => (
          <div key={a} className="h-[19px] shrink-0 grid grid-cols-[120px_120px] gap-[5px] leading-[19px]">
            <div className="flex justify-between"><span className={lbl}>{a}</span><span className={`${num} text-[#b0b0b0]`}>{b}</span></div>
            <div className="flex justify-between"><span className={lbl}>{d}</span><span className={`${num} text-[#b0b0b0]`}>{e}</span></div>
          </div>
        ))}
      </div>
      <div className="h-[22px] shrink-0 flex items-center border-b border-[#c00000] pl-px text-[15px] whitespace-nowrap">
        <span className="text-[#c0c0c0]">北京君正</span>
        <span className="text-[#ff3232] pl-[11px]">35.44 9.99%</span>
      </div>
      <TimeChart />
    </div>
  );
}

export default function App() {
  return (
    <div className="w-[1910px] h-[702px] bg-black overflow-hidden flex flex-col relative [font-family:'Liberation_Sans','Noto_Sans_CJK_SC',sans-serif]">
      <TopMenu />
      <Toolbar />
      <div className="flex-1 flex min-h-0">
        <Sidebar />
        <div className="w-[1415px] shrink-0 flex flex-col">
          <PeriodRow />
          <div className="flex flex-1 min-h-0">
            <ChartCol />
            <div className="w-[50px] shrink-0 border-r border-[#c00000] box-content"><AxisCol /></div>
          </div>
        </div>
        <OrderBook />
        <QuotePanel />
        <RightBar />
      </div>
      <div className="absolute left-[1798px] top-[668px] text-[16px] font-bold text-[#989898] scale-y-150 whitespace-nowrap tracking-[-0.3px] [text-shadow:0_0_3px_#555]">178448.COM</div>
    </div>
  );
}
